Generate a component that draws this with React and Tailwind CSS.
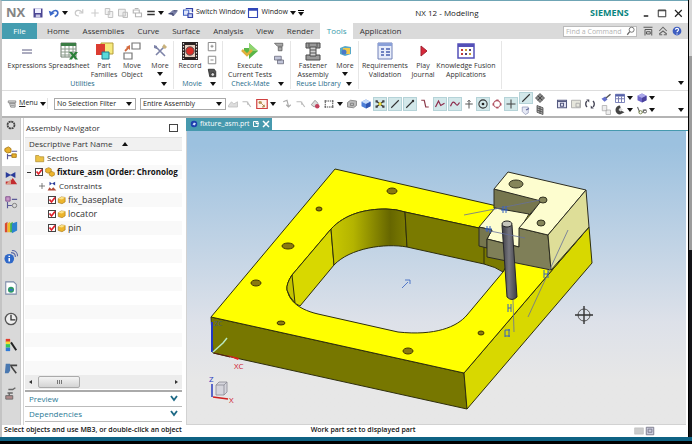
import clsx from 'clsx';

function Icon({ className = 'w-3.5 h-3.5', box = 16, children }) {
  return (
    <svg viewBox={`0 0 ${box} ${box}`} className={clsx('block shrink-0', className)} fill="none" aria-hidden="true">
      {children}
    </svg>
  );
}

function Caret({ className }) {
  return (
    <svg viewBox="0 0 6 4" className={clsx('block h-1 w-1.5 shrink-0', className)} aria-hidden="true">
      <path d="M0 0h6L3 4z" fill="#111" />
    </svg>
  );
}

const icons = {
  save: (
    <>
      <path d="M2 2h12v12H2z" fill="#4a4593" />
      <path d="M4 2h8v6H4z" fill="#eef" />
      <path d="M5 10h6v4H5z" fill="#c9c8e4" />
    </>
  ),
  undo: (
    <>
      <path d="M5 8C8 3 14 4 13 9c-.4 2-2 3-4 4" stroke="#3a68c8" strokeWidth="2.2" />
      <path d="M1 5l2 7 6-4z" fill="#3a68c8" />
    </>
  ),
  redo: <path d="M12 7C9 3 3 4 3 8c0 2 2 4 5 4M13 3v5H8" stroke="#c9c9c9" strokeWidth="1.6" />,
  plus: <path d="M8 3v10M3 8h10" stroke="#ccc" strokeWidth="1.5" />,
  copy: <path d="M3 2h6v8H3zM7 6h6v8H7z" stroke="#c2c2c2" strokeWidth="1.3" fill="#f3f3f3" />,
  paste: <path d="M2 3h9v9H2zM8 7h6v7H8z" stroke="#bdbdbd" strokeWidth="1.3" fill="#f0f0f0" />,
  clip: <path d="M3 4h8v4H3zM6 8h8v5H6zM5 2h5" stroke="#b5b5b5" strokeWidth="1.5" />,
  equals: <path d="M3 6h10M3 10h10" stroke="#333" strokeWidth="1.8" />,
  touch: (
    <>
      <path d="M2 9l6-5 6 2-5 6z" fill="#7b81a8" />
      <path d="M2 9h6v3M9 5h5" stroke="#343a66" strokeWidth="1.3" />
    </>
  ),
  switchWin: (
    <>
      <path d="M2 4h7v7H2z" fill="#dfe6fa" stroke="#3c5fc0" strokeWidth="1.4" />
      <path d="M5 2h9v5M8 9h6v5H8z" stroke="#3340a5" strokeWidth="1.6" fill="#c7d4f4" />
    </>
  ),
  window: (
    <>
      <path d="M2 2h12v12H2z" fill="#fff" stroke="#3146b8" strokeWidth="1.5" />
      <path d="M2 2h12v3H2z" fill="#3146b8" />
    </>
  ),
  gray1: <path d="M2 10l4-5 3 3 5-3v7H2z" fill="#ddd" stroke="#bbb" />,
  gray2: <path d="M2 5h6l5 7M9 5v4" stroke="#bbb" strokeWidth="1.6" />,
  redBox: (
    <>
      <path d="M1 2h14v12H1z" fill="#fff3ea" stroke="#d04040" strokeWidth="1.6" />
      <path d="M4 5h3v2H4zM7 7l4 4M11 9v3H8" fill="#d8c070" stroke="#a0702f" />
    </>
  ),
  arrowDown: <path d="M3 5l5-2 2 8M7 9l3 3 3-3" stroke="#aaa" strokeWidth="1.5" />,
  redDot: (
    <>
      <path d="M3 9l5-6 4 4-5 5z" fill="#ddd" stroke="#888" />
      <circle cx="11" cy="11" r="3" fill="#c2405c" />
    </>
  ),
  dashed: (
    <>
      <path d="M3 4h10v8H3z" stroke="#444" strokeWidth="1.3" strokeDasharray="2 1" />
      <path d="M2 3h2v2H2zM12 3h2v2h-2zM2 11h2v2H2zM12 11h2v2h-2z" fill="#666" />
    </>
  ),
  drum: <path d="M2 6l4-3 8 1v6l-4 3-8-1zM6 7h4v3H6z" fill="#bbb" stroke="#777" />,
  blueCube: (
    <>
      <path d="M2 5l6-3 6 3v6l-6 3-6-3z" fill="#4d7fd8" />
      <path d="M2 5l6-3 6 3-6 3z" fill="#c7dcfa" />
      <path d="M8 8v6l6-3V5z" fill="#3056b0" />
    </>
  ),
  snap: (
    <>
      <path d="M3 4l10 8M13 4L3 12" stroke="#333" strokeWidth="1.6" />
      <circle cx="8" cy="8" r="2.2" fill="#e8d427" />
      <path d="M2 3h3v3H2zM11 3h3v3h-3zM2 10h3v3H2zM11 10h3v3h-3z" fill="#444" />
    </>
  ),
  line: <path d="M3 13L13 3" stroke="#333" strokeWidth="1.5" />,
  lineDot: (
    <>
      <path d="M3 13L13 3" stroke="#333" strokeWidth="1.5" />
      <circle cx="12" cy="4" r="1.6" fill="#333" />
    </>
  ),
  step: <path d="M3 3h4l2 9h4" stroke="#8c3a4a" strokeWidth="1.6" />,
  wave: <path d="M2 12L6 4l3 6 5-3" stroke="#8c2a4a" strokeWidth="1.6" />,
  curve: <path d="M2 11c3-8 5-6 7-3s3 1 5-2" stroke="#8c2a4a" strokeWidth="1.6" />,
  up: <path d="M8 3v11M3 8h10M6 5l2-2 2 2" stroke="#555" strokeWidth="1.3" />,
  target: (
    <>
      <circle cx="8" cy="8" r="5.5" stroke="#333" strokeWidth="1.4" />
      <circle cx="8" cy="8" r="1.8" fill="#222" />
    </>
  ),
  quad: (
    <>
      <circle cx="8" cy="8" r="4.5" stroke="#b05060" strokeWidth="1.4" />
      <path d="M7 2h3v2H7zM7 12h3v2H7zM2 7h2v3H2zM12 7h2v3h-2z" fill="#b05060" />
    </>
  ),
  cross: <path d="M8 2v12M2 8h12" stroke="#444" strokeWidth="1.4" />,
  face: (
    <>
      <path d="M3 4h8v8l-4 2-4-4z" fill="#e6e9f5" stroke="#9298b8" />
      <path d="M8 8l4-2" stroke="#5a6398" strokeWidth="1.5" />
    </>
  ),
  move4: <path d="M8 2l3 3-3 3-3-3zM8 8l3 3-3 3-3-3zM2 8l3-3 3 3-3 3zM8 8l3-3 3 3-3 3z" fill="#888" stroke="#444" />,
  mesh: <path d="M4 2l8 3v9l-8-3zM4 5l8 3M4 8l8 3M8 3v10" fill="#aaa" stroke="#444" />,
  fit: (
    <>
      <path d="M2 3h12v10H2z" fill="#e5e5f3" stroke="#555a80" strokeWidth="1.4" />
      <path d="M2 4.500h12M6 7h4v4H6z" stroke="#555a80" strokeWidth="1.4" />
    </>
  ),
  fitGray: <path d="M2 3h12v10H2zM8 7h5v5H8z" fill="#e6e6dc" stroke="#aaa" strokeWidth="1.2" />,
  refresh: (
    <>
      <path d="M4 12a5.500 5.500 0 010-8M12 4a5.500 5.500 0 010 8" stroke="#445" strokeWidth="1.8" />
      <path d="M3 2h4v4zM13 14H9v-4z" fill="#445" />
    </>
  ),
  brush: (
    <>
      <path d="M2 9l5-3 3 4-4 3z" fill="#6470cc" />
      <path d="M8 8l6-5" stroke="#555" strokeWidth="2" />
    </>
  ),
  pageGray: <path d="M3 2h6v7H3zM8 8h6v6H8z" fill="#eee" stroke="#aaa" />,
  table: (
    <>
      <path d="M2 3h12v11H2z" fill="#fff" stroke="#5560a8" />
      <path d="M2 3h12v3H2z" fill="#5560a8" />
      <path d="M2 9h12M6 6v8M10 6v8" stroke="#777cb0" strokeWidth="1.3" />
    </>
  ),
  halfMoon: (
    <>
      <path d="M8 2a6 6 0 100 12l6-3-4-2z" fill="#444" />
      <path d="M8 5l4 2-3 3-3-2z" fill="#ddd" />
    </>
  ),
  purpleCube: (
    <>
      <path d="M2 5l6-3 6 3v6l-6 3-6-3z" fill="#6e66c8" />
      <path d="M2 5l6-3 6 3-6 3z" fill="#aaa7ea" />
      <path d="M8 8v6l6-3V5z" fill="#4b439c" />
    </>
  ),
  glasses: (
    <>
      <path d="M2 4l3 7M9 8h5M10 8l-1 4" stroke="#666" strokeWidth="1.4" />
      <circle cx="6" cy="11" r="2.2" stroke="#7c8a50" strokeWidth="1.3" />
      <circle cx="12" cy="10" r="2" stroke="#666" strokeWidth="1.3" />
    </>
  ),
};

function ToolButton({ name, on, className = 'h-3.5 w-3.5' }) {
  return (
    <button
      type="button"
      aria-label={name}
      className={clsx('flex shrink-0 items-center justify-center', on && 'border border-[#b5d3d8] bg-[#d3e8ea]', className)}
    >
      <Icon className="h-3 w-3">{icons[name]}</Icon>
    </button>
  );
}

function TitleBar() {
  return (
    <header className="flex h-[22px] shrink-0 items-center pt-px text-[7px] text-[#222]">
      <span className="w-[29px] pl-1 text-[13px] font-bold text-[#858585]">NX</span>
      <ToolButton name="save" />
      <ToolButton name="undo" className="ml-0.5 h-3.5 w-3.5" />
      <Caret className="ml-px" />
      <div className="ml-1 flex items-center">
        <ToolButton name="redo" />
        <ToolButton name="plus" className="ml-0.5 h-3.5 w-3.5" />
        <ToolButton name="copy" />
        <ToolButton name="paste" />
        <ToolButton name="clip" />
      </div>
      <ToolButton name="equals" />
      <Caret />
      <ToolButton name="touch" className="ml-0.5 h-3.5 w-3.5" />
      <button type="button" className="ml-0.5 flex items-center gap-0.5 whitespace-nowrap">
        <Icon className="h-3 w-3">{icons.switchWin}</Icon>
        Switch Window
      </button>
      <button type="button" className="ml-0.5 flex items-center gap-0.5">
        <Icon className="h-3 w-3">{icons.window}</Icon>
        Window
        <Caret />
      </button>
      <button type="button" aria-label="Customize" className="ml-0.5 flex flex-col gap-px">
        <span className="h-px w-1.5 bg-black" />
        <Caret />
      </button>
      <h1 className="flex-1 text-center text-[8px] text-[#222]">NX 12 - Modeling</h1>
      <span className="w-[38px] text-[9px] leading-3 font-bold text-[#0a8580]">SIEMENS</span>
      <div className="ml-3 flex items-center gap-1 pr-1">
        <button type="button" aria-label="Minimize">
          <Icon className="h-3 w-3"><path d="M5 12h6" stroke="#222" strokeWidth="2" /></Icon>
        </button>
        <button type="button" aria-label="Maximize">
          <Icon className="h-3 w-3"><path d="M3 4h10v9H3zM3 5h10" stroke="#333" strokeWidth="1.3" /></Icon>
        </button>
        <button type="button" aria-label="Close">
          <Icon className="h-3 w-3"><path d="M4 4l9 9M13 4l-9 9" stroke="#222" strokeWidth="1.6" /></Icon>
        </button>
      </div>
    </header>
  );
}

const tabs = ['Home', 'Assemblies', 'Curve', 'Surface', 'Analysis', 'View', 'Render', 'Tools', 'Application'];

function TabBar() {
  return (
    <nav className="flex h-4 shrink-0 items-stretch bg-[#dadada] text-[8px] text-[#333]">
      <button type="button" className="w-[35px] bg-[#449db0] text-white">File</button>
      <div className="flex pl-[3px]">
        {tabs.map((tab) => (
          <button key={tab} type="button" className={clsx('pr-1.5 pl-[7px]', tab === 'Tools' && 'bg-white text-[#3a9cac]')}>
            {tab}
          </button>
        ))}
      </div>
      <div className="ml-auto flex items-center gap-[3px] pr-1.5">
        <label className="flex h-[11px] w-[74px] items-center border border-[#bbb] bg-white">
          <input
            type="text"
            aria-label="Find a Command"
            placeholder="Find a Command"
            className="w-full min-w-0 px-0.5 text-[7px] leading-[9px] outline-none placeholder:text-[#b3b3b3]"
          />
          <Icon className="h-2.5 w-2.5">
            <circle cx="9" cy="6" r="4" stroke="#666" strokeWidth="1.4" />
            <path d="M6 9l-4 5" stroke="#666" strokeWidth="2" />
          </Icon>
        </label>
        <button type="button" aria-label="Full screen" className="ml-0.5">
          <Icon className="h-3 w-3"><path d="M2 3h12M4 6h9v8M4 6v8M6 9h5v3H6z" stroke="#555" strokeWidth="1.3" /></Icon>
        </button>
        <button type="button" aria-label="Minimize ribbon">
          <Icon className="h-3 w-3"><path d="M3 8l5-5 5 5M3 12l5-4 5 4M3 13h4M9 13h4" stroke="#666" strokeWidth="1.4" /></Icon>
        </button>
        <button type="button" aria-label="Help">
          <Icon className="h-2.5 w-2.5">
            <circle cx="8" cy="8" r="7" fill="#3d5dc0" />
            <path d="M5.500 6c0-3 5-3 5 0 0 2-2.500 2-2.500 4M8 12v1.500" stroke="#fff" strokeWidth="1.8" />
          </Icon>
        </button>
      </div>
    </nav>
  );
}

const ribbonIcons = {
  expressions: <path d="M5 9h10M5 12h10" stroke="#5a5a80" strokeWidth="1" />,
  spreadsheet: (
    <>
      <path d="M2 2h15v14H2z" fill="#fff" stroke="#6a7a6a" />
      <path d="M2 2h15v3H2z" fill="#3b7d45" />
      <path d="M2 8h15M2 11h15M2 14h15M6 5v11M10 5v11M14 5v11" stroke="#8a9a8a" strokeWidth="1" />
      <path d="M10 11h3l1.500 2 1.500-2h3l-3 3.500 3 4h-3L14.500 16 13 18.500h-3l3-4z" fill="#2a8038" />
    </>
  ),
  families: (
    <>
      <path d="M7 2h12v11H7z" fill="#f6ea7e" stroke="#b59d39" />
      <path d="M2 3h9v11H2z" fill="#dc3c31" />
      <path d="M8 11h7v7H8z" fill="#5adada" stroke="#1f7d90" />
    </>
  ),
  move: (
    <>
      <path d="M10 2h8v6h-8zM2 12h8v6H2z" fill="#fff" stroke="#777" strokeWidth="1.2" />
      <path d="M3 10l3-3" stroke="#d36a3e" strokeWidth="1.8" />
      <path d="M8 4v5L4 6z" fill="#d36a3e" />
    </>
  ),
  tools: (
    <>
      <path d="M6 6l9 9M15 5l-9 9" stroke="#7d83a8" strokeWidth="1.6" />
      <path d="M14 3l3 3-2 2-3-2z" fill="#c9b27c" />
      <path d="M4 4l3 1v3l-3-1z" fill="#7d83a8" />
    </>
  ),
  record: (
    <>
      <path d="M2 1h16v18H2z" fill="#2a2222" />
      <path d="M5 4h10v12H5z" fill="#e8d0c0" />
      <path d="M3.500 2v16M16.500 2v16" stroke="#ddd" strokeWidth="1.200" strokeDasharray="1.500 1.500" />
      <circle cx="10" cy="10" r="4.200" fill="#dd2f28" stroke="#555" />
    </>
  ),
  execute: (
    <>
      <path d="M9 2l9 8-9 8v-5H4V7h5z" fill="#5ab548" />
      <path d="M9 2l9 8H9z" fill="#8fd572" />
      <path d="M2 9l5 5 5-5" stroke="#e0b13c" strokeWidth="2.500" />
    </>
  ),
  fastener: (
    <>
      <path d="M3 2h14v5H3zM3 14h14v5H3z" fill="#9a9a9a" stroke="#4a4a4a" />
      <path d="M7 6h6v9H7z" fill="#d0d0d0" stroke="#4a4a4a" />
      <path d="M6 2v4M14 2v4M7 9h6M7 12h6" stroke="#555" />
    </>
  ),
  library: (
    <>
      <path d="M5 7l5-2 6 1v7l-6 2-5-2z" fill="#58a8c8" />
      <path d="M8 7h7v6H8z" fill="#f0c94a" />
      <circle cx="9" cy="11" r="2.500" fill="#4a78c8" />
    </>
  ),
  requirements: (
    <>
      <path d="M3 2h14v16H3z" fill="#e8edfa" stroke="#7080b8" />
      <path d="M3 2h14v3H3z" fill="#8aa0d8" />
      <path d="M6 8h3M11 8h4M6 11h3M11 11h4M6 14h3M11 14h4" stroke="#4a60b0" strokeWidth="1.500" />
    </>
  ),
  play: <path d="M8 5l6 5-6 5z" fill="#d8283a" stroke="#a02030" />,
  knowledge: (
    <>
      <path d="M2 3h16v14H2z" fill="#fff" stroke="#5450b8" strokeWidth="1.500" />
      <path d="M2 3h16v3H2z" fill="#5450b8" />
      <path d="M5 9h2M5 13h2" stroke="#c23a3a" strokeWidth="2" />
      <path d="M9 9h2M13 13h2" stroke="#c89b30" strokeWidth="2" />
      <path d="M13 9h2M9 13h2" stroke="#51407a" strokeWidth="2" />
    </>
  ),
};

function RibbonButton({ icon, lines, caret, className }) {
  return (
    <button type="button" className={clsx('flex flex-col items-center justify-start whitespace-nowrap leading-[9px]', className)}>
      <Icon box={20} className="h-5 w-5">{ribbonIcons[icon]}</Icon>
      <span className="block">{lines[0]}</span>
      {lines[1] && <span className="block">{lines[1]}</span>}
      {caret && <Caret className="mt-0.5" />}
    </button>
  );
}

function RibbonGroup({ label, children, className }) {
  return (
    <section className={clsx('flex shrink-0 flex-col border-r border-[#e6e6e6]', className)}>
      <div className="flex flex-1">{children}</div>
      {label && (
        <div className="flex h-2.5 items-center pr-1.5 leading-[10px] text-[#1f6c8a]">
          <span className="flex-1 text-center whitespace-nowrap">{label}</span>
          <Caret />
        </div>
      )}
    </section>
  );
}

function SmallStack({ children }) {
  return <div className="flex flex-col items-center gap-px">{children}</div>;
}

function Ribbon() {
  return (
    <div className="flex h-[52px] shrink-0 items-stretch border-b border-[#ddd] pt-0.5 pb-px pl-0.5 text-[7px] text-[#333]">
      <RibbonGroup label="Utilities" className="w-[170px]">
        <RibbonButton icon="expressions" lines={['Expressions']} className="w-[46px]" />
        <RibbonButton icon="spreadsheet" lines={['Spreadsheet']} className="w-[38px]" />
        <RibbonButton icon="families" lines={['Part', 'Families']} className="w-8" />
        <RibbonButton icon="move" lines={['Move', 'Object']} className="w-6" />
        <RibbonButton icon="tools" lines={['More']} caret className="ml-1 w-6" />
      </RibbonGroup>
      <RibbonGroup label="Movie" className="w-[49px]">
        <RibbonButton icon="record" lines={['Record']} className="w-8" />
        <SmallStack>
          <button type="button" aria-label="Pause"><Icon className="h-3 w-3"><path d="M3 2h10v11H3zM6 7h4M8 5v4" stroke="#888" strokeWidth="1.3" /></Icon></button>
          <button type="button" aria-label="Stop"><Icon className="h-3 w-3"><path d="M3 3h10v10H3zM6 8h4" stroke="#888" strokeWidth="1.3" /></Icon></button>
          <button type="button" aria-label="Movie settings">
            <Icon className="h-3 w-3">
              <path d="M3 3h8l2 3v7H5z" fill="#555" stroke="#222" />
              <circle cx="9" cy="10" r="2.500" fill="#ddd" stroke="#222" />
            </Icon>
          </button>
        </SmallStack>
      </RibbonGroup>
      <RibbonGroup label="Check-Mate" className="w-[68px]">
        <RibbonButton icon="execute" lines={['Execute', 'Current Tests']} className="w-[50px] pl-1" />
        <SmallStack>
          <button type="button" aria-label="Set up tests"><Icon className="h-3 w-3"><path d="M2 3h11v4H6zM7 8h5v5H7z" fill="#aaa" stroke="#555" /></Icon></button>
          <button type="button" aria-label="View results"><Icon className="h-3 w-3"><path d="M2 3h9v5H2zM6 8h8v5H6z" fill="#c0c4d8" stroke="#667" /></Icon></button>
        </SmallStack>
      </RibbonGroup>
      <RibbonGroup label="Reuse Library" className="w-[68px]">
        <RibbonButton icon="fastener" lines={['Fastener', 'Assembly']} className="w-11" />
        <RibbonButton icon="library" lines={['More']} caret className="w-5" />
      </RibbonGroup>
      <RibbonGroup className="w-[143px]">
        <RibbonButton icon="requirements" lines={['Requirements', 'Validation']} className="w-[52px]" />
        <RibbonButton icon="play" lines={['Play', 'Journal']} className="w-6" />
        <RibbonButton icon="knowledge" lines={['Knowledge Fusion', 'Applications']} className="w-[62px]" />
      </RibbonGroup>
      <button type="button" aria-label="Ribbon options" className="mt-auto mr-1 mb-1 ml-auto"><Caret /></button>
    </div>
  );
}

function Combo({ label, className }) {
  return (
    <div className={clsx('relative shrink-0', className)}>
      <select aria-label={label} className="block h-3 w-full appearance-none border border-[#aaa] bg-white pr-3 pl-0.5 text-[7px] leading-[10px] text-[#222]">
        <option>{label}</option>
      </select>
      <Caret className="pointer-events-none absolute top-1 right-1" />
    </div>
  );
}

function SelectionBar() {
  return (
    <div className="flex h-[27px] shrink-0 items-center border-b-2 border-[#b4b4b4] pl-1 text-[7px]">
      <button type="button" className="mr-1.5 flex w-[42px] items-center justify-center gap-0.5 border-r border-[#e3e3e3] text-[7px] text-[#222]">
        <Icon className="h-2.5 w-2.5"><path d="M2 3h12v3H2zM4 7h9v6H6zM6 10h6" fill="#ddd" stroke="#777" strokeWidth="1.2" /></Icon>
        <span><span className="underline">M</span>enu</span>
        <Caret />
      </button>
      <Combo label="No Selection Filter" className="w-[82px]" />
      <Combo label="Entire Assembly" className="ml-1 w-[86px]" />
      <div className="flex items-center">
        <ToolButton name="gray1" />
        <ToolButton name="gray2" />
        <ToolButton name="redBox" className="ml-px h-3.5 w-3.5" />
        <Caret className="ml-px" />
        <ToolButton name="arrowDown" className="ml-1 h-3.5 w-3.5" />
        <ToolButton name="gray2" />
        <ToolButton name="redDot" />
        <ToolButton name="dashed" />
        <Caret className="ml-px" />
        <ToolButton name="drum" className="ml-0.5 h-3.5 w-3.5" />
        <ToolButton name="blueCube" />
      </div>
      <div className="flex items-center gap-px">
        <ToolButton name="snap" on />
        <ToolButton name="line" on />
        <ToolButton name="lineDot" on />
        <ToolButton name="step" />
        <ToolButton name="wave" on />
        <ToolButton name="curve" on />
        <ToolButton name="up" className="h-3.5 w-3" />
        <ToolButton name="target" on />
        <ToolButton name="quad" className="h-3.5 w-3" />
        <ToolButton name="cross" on />
        <div className="grid grid-cols-2">
          <ToolButton name="line" on className="h-3 w-3.5" />
          <ToolButton name="move4" className="h-3 w-3.5" />
          <ToolButton name="face" className="h-3 w-3.5" />
          <ToolButton name="mesh" className="h-3 w-3.5" />
        </div>
      </div>
      <div className="ml-2 flex items-center">
        <ToolButton name="fit" />
        <ToolButton name="fitGray" />
        <ToolButton name="refresh" />
      </div>
      <div className="ml-0.5 flex flex-col">
        {[['brush', 'table', 'purpleCube'], ['pageGray', 'halfMoon', 'glasses']].map(([a, b, c]) => (
          <div key={a} className="flex items-center">
            <ToolButton name={a} className="h-3 w-3.5" />
            <ToolButton name={b} className="h-3 w-3.5" />
            <Caret />
            <ToolButton name={c} className="ml-0.5 h-3 w-3.5" />
            <Caret />
          </div>
        ))}
      </div>
      <button type="button" aria-label="Selection bar options" className="mt-3 mr-1 ml-auto"><Caret /></button>
    </div>
  );
}

const railItems = [
  {
    label: 'Options',
    height: 'h-3.5',
    art: <circle cx="8" cy="8" r="4" stroke="#444" strokeWidth="2" strokeDasharray="2.500 .6" />,
  },
  {
    label: 'Assembly Navigator',
    height: 'mt-2 h-[26px] bg-white',
    art: (
      <>
        <path d="M1 3l4-2 3 2v4L4 8 1 6z" fill="#e9b12e" stroke="#a67713" />
        <path d="M4 9v6M4 11h5M9 6h6" stroke="#5a5a98" strokeWidth="1.3" />
        <path d="M9 9h5v4H9z" fill="#e9b12e" stroke="#a67713" />
      </>
    ),
  },
  {
    label: 'Constraint Navigator',
    height: 'h-[24px]',
    art: (
      <>
        <path d="M2 1v7l6-3.500zM13 1v7L7 4.500z" fill="#2a3c9a" />
        <path d="M2 15h13l-5-7-3 4H2z" fill="#c22c30" />
        <path d="M2 15h6V9z" fill="#d9a08a" />
      </>
    ),
  },
  {
    label: 'Part Navigator',
    height: 'h-[24px]',
    art: (
      <>
        <path d="M2 2h5v5H2z" fill="#c998c8" stroke="#7a4a88" />
        <path d="M4 8v7M4 12h5M9 5h6" stroke="#5a5a98" strokeWidth="1.300" />
        <circle cx="12" cy="12" r="2.500" stroke="#777" />
      </>
    ),
  },
  {
    label: 'Reuse Library',
    height: 'h-[26px]',
    art: (
      <>
        <path d="M1 4l3-2v12H1z" fill="#d84a30" />
        <path d="M4 4l3-2v12H4z" fill="#edbd28" />
        <path d="M7 4l3-2v12H7z" fill="#45b548" />
        <path d="M9 4l6-2v10l-6 3z" fill="#2b82cf" />
      </>
    ),
  },
  {
    label: 'HD3D Tools',
    height: 'h-[34px]',
    art: (
      <>
        <circle cx="6" cy="10" r="5.500" fill="#2f68c8" />
        <path d="M6 9v4M6 6.500v1.500" stroke="#fff" strokeWidth="1.800" />
        <path d="M8 3c3 0 5 2 5 5M9 .5c4 0 6.500 3 6.500 6.500" stroke="#5f6ca8" strokeWidth="1.300" />
      </>
    ),
  },
  {
    label: 'Web Browser',
    height: 'h-[28px]',
    art: (
      <>
        <path d="M2 1h9l3 3v11H2z" fill="#fff" stroke="#7c8ba8" strokeWidth="1.200" />
        <circle cx="8" cy="10" r="3.500" fill="#2f9a68" />
        <path d="M6 9h4v2H7z" fill="#3a70c8" />
      </>
    ),
  },
  {
    label: 'History',
    height: 'h-[34px]',
    art: (
      <>
        <circle cx="8" cy="8" r="6.500" fill="#eee" stroke="#555" strokeWidth="1.500" />
        <path d="M8 3v6h5" stroke="#333" strokeWidth="1.500" />
      </>
    ),
  },
  {
    label: 'System Materials',
    height: 'h-[18px]',
    art: (
      <>
        <path d="M2 1h5v4H2z" fill="#e23c2c" />
        <path d="M2 4h5v3H2z" fill="#f3dc32" />
        <path d="M2 7h5v4H2z" fill="#36c858" />
        <path d="M2 11h5v4H2z" fill="#2f7ad8" />
        <path d="M8 5l6 9" stroke="#222" strokeWidth="2.200" />
      </>
    ),
  },
  {
    label: 'Process Studio',
    height: 'h-[28px]',
    art: (
      <>
        <path d="M2 3h5v8l-2 3H1z" fill="#4a78b0" />
        <path d="M7 5h8M8 6l6 8" stroke="#444" strokeWidth="1.800" />
      </>
    ),
  },
  {
    label: 'Roles',
    height: 'h-[22px]',
    art: (
      <>
        <path d="M5 4h5l3-2M4 8h6M6 8v4" stroke="#666" strokeWidth="1.600" />
        <path d="M2 11h8v4H2z" fill="#b08a8a" stroke="#666" />
      </>
    ),
  },
];

function ResourceRail() {
  return (
    <aside className="flex w-[19px] shrink-0 flex-col border-r border-[#c9c9c9] bg-[#d9d9d9]">
      {railItems.map((item) => (
        <button key={item.label} type="button" aria-label={item.label} className={clsx('flex shrink-0 items-center justify-center', item.height)}>
          <Icon className="h-3.5 w-3.5">{item.art}</Icon>
        </button>
      ))}
    </aside>
  );
}

function PartIcon() {
  return (
    <Icon className="h-2.5 w-2.5">
      <path d="M2 6l5-3 6 1v7l-5 3-6-2z" fill="#edb52d" stroke="#a87918" />
      <path d="M2 6l5-3 6 1-5 3z" fill="#fbe28a" />
    </Icon>
  );
}

function Check({ label }) {
  return (
    <span className="relative block h-2 w-2 shrink-0">
      <input type="checkbox" defaultChecked aria-label={label} className="block h-2 w-2 appearance-none border border-[#444] bg-white" />
      <svg viewBox="0 0 8 8" className="pointer-events-none absolute inset-0 h-2 w-2" fill="none" aria-hidden="true">
        <path d="M1.500 3.500L3.500 6 7 1.500" stroke="#e0202a" strokeWidth="1.700" />
      </svg>
    </span>
  );
}

const rowClass = 'flex h-3.5 shrink-0 items-center whitespace-nowrap overflow-hidden';

function AssemblyNavigator() {
  return (
    <section className="ml-0.5 flex w-[159px] shrink-0 flex-col border-l border-[#d5d5d5] pl-px">
      <div className="flex h-[19px] shrink-0 items-center justify-between pr-1 pl-px text-[8px] text-[#333]">
        Assembly Navigator
        <button type="button" aria-label="Float panel" className="h-2 w-[9px] border border-[#444]" />
      </div>
      <div className="flex h-3.5 shrink-0 items-center gap-2.5 border-y border-[#e2e2e2] bg-[#f1f1f1] pl-1 text-[8px] text-[#333]">
        Descriptive Part Name
        <Caret className="rotate-180" />
      </div>
      <ul className="flex min-h-0 flex-1 flex-col overflow-hidden text-[8px] text-[#333]">
        <li className={clsx(rowClass, 'gap-0.5 pl-2.5')}>
          <Icon className="h-2.5 w-2.5"><path d="M1 4h5l2 2h6v8H1z" fill="#ecc245" stroke="#a58024" /></Icon>
          Sections
        </li>
        <li className={clsx(rowClass, 'gap-0.5 bg-[#f9f9f9] pl-0.5 font-bold text-[#111]')}>
          <span className="h-px w-1 shrink-0 bg-[#333]" />
          <span className="pl-0.5"><Check label="fixture_asm" /></span>
          <Icon className="h-2.5 w-2.5">
            <path d="M1 3l5-2 4 2v5l-5 2-4-2z" fill="#edb52d" stroke="#a87918" />
            <path d="M7 9l4-2 4 2v4l-4 2-4-2z" fill="#edb52d" stroke="#a87918" />
          </Icon>
          fixture_asm (Order: Chronolog
        </li>
        <li className={clsx(rowClass, 'gap-0.5 pl-3.5')}>
          <Icon box={8} className="h-1.5 w-1.5"><path d="M4 0v8M0 4h8" stroke="#555" /></Icon>
          <Icon className="h-2.5 w-2.5">
            <path d="M4 1v6l4-3zM13 1v6L8 4z" fill="#2a3c9a" />
            <path d="M1 15h14l-5-5-3 3-3-3z" fill="#b04a38" />
          </Icon>
          Constraints
        </li>
        {['fix_baseplate', 'locator', 'pin'].map((name, i) => (
          <li key={name} className={clsx(rowClass, 'gap-px pl-[23px] text-[9px]', i % 2 === 0 && 'bg-[#f9f9f9]')}>
            <Check label={name} />
            <PartIcon />
            {name}
          </li>
        ))}
        {Array.from({ length: 10 }, (_, i) => (
          <li key={i} aria-hidden="true" className={clsx('h-3.5 shrink-0', i % 2 === 1 && 'bg-[#f9f9f9]')} />
        ))}
      </ul>
      <div className="flex h-3.5 shrink-0 items-center bg-[#ececec] px-1">
        <button type="button" aria-label="Scroll left" className="border-y-2 border-r-[3px] border-y-transparent border-r-[#333]" />
        <div className="ml-1.5 flex h-3 w-[42px] items-center justify-center gap-px rounded-xs border border-[#aaa] bg-linear-to-b from-[#f4f4f4] to-[#d4d4d4]">
          <span className="h-1 w-px bg-[#777]" />
          <span className="h-1 w-px bg-[#777]" />
          <span className="h-1 w-px bg-[#777]" />
        </div>
        <button type="button" aria-label="Scroll right" className="ml-auto border-y-2 border-l-[3px] border-y-transparent border-l-[#333]" />
      </div>
      <div className="mt-px h-0.5 shrink-0 bg-[#aaa]" />
      {['Preview', 'Dependencies'].map((name) => (
        <button key={name} type="button" className="flex h-[15px] shrink-0 items-center justify-between border-b border-[#bbb] px-1 text-[8px] text-[#2b7a96]">
          {name}
          <Icon box={8} className="h-2 w-2"><path d="M1 1l3 4 3-4" stroke="#1d6985" strokeWidth="1.800" /></Icon>
        </button>
      ))}
      <div className="h-[3px] shrink-0" />
    </section>
  );
}

const plateHoles = [
  [392, 191, 5, 3],
  [319, 209, 3, 2],
  [288, 246, 6, 3],
  [256, 283, 5, 3],
  [281, 323, 4, 2],
  [408, 351, 5, 3],
  [481, 333, 3, 2],
];

const locatorHoles = [
  [516, 184, 7, 4],
  [543, 200, 4, 3],
  [541, 223, 4, 3],
];

function Model() {
  return (
    <svg viewBox="187 131 499 293" className="h-full w-full" fill="none" role="img" aria-label="fixture_asm model">
      <defs>
        <linearGradient id="corner" x1="331" y1="0" x2="405" y2="0" gradientUnits="userSpaceOnUse">
          <stop offset="0" stopColor="#c9c900" />
          <stop offset="0.3" stopColor="#b4b400" />
          <stop offset="0.8" stopColor="#666600" />
          <stop offset="1" stopColor="#7a7a00" />
        </linearGradient>
        <linearGradient id="pin" x1="502" y1="0" x2="516" y2="0" gradientUnits="userSpaceOnUse">
          <stop offset="0" stopColor="#3c3c42" />
          <stop offset="0.5" stopColor="#77777f" />
          <stop offset="1" stopColor="#45454b" />
        </linearGradient>
      </defs>
      <g stroke="#2e2e0c" strokeWidth="1" strokeLinejoin="round">
        <path d="M211 317L464 373 467 409 213 353z" fill="#777700" />
        <path d="M464 373L589 227 592 263 467 409z" fill="#d8d800" />
        <path
          fillRule="evenodd"
          fill="#ffff00"
          d="M335 169L589 227 464 373 211 317zM331 229C345 214 365 209 386 209Q396 209 405 212L479 228C504 234 518 247 503 272L467 315C457 327 435 336 398 332L318 314C296 309 280 296 292 275z"
        />
        <path d="M292 275L331 229 334 265 300 306Q290 302 287 290Q286 284 292 275z" fill="#d8d800" />
        <path d="M292 275Q286 284 287 290Q289 297 295 303z" fill="#c4c400" />
        <path d="M331 229C345 214 365 209 386 209Q396 209 405 212L407 247C385 243 350 248 334 265z" fill="url(#corner)" />
        <path d="M405 212L479 228 500 233 515 250 503 272Q496 267 484 264L407 247z" fill="#7a7a00" />
        <path d="M484 240v24" />
      </g>
      {plateHoles.map(([x, y, rx, ry]) => (
        <ellipse key={`${x}-${y}`} cx={x} cy={y} rx={rx} ry={ry} fill="#8a7a10" stroke="#443800" />
      ))}

      <g stroke="#2c2c22" strokeWidth="1" strokeLinejoin="round">
        <path d="M494 189L543 200 529 215 494 208z" fill="#76764e" />
        <path d="M495 208L529 214 520 229 519 247 487 239 492 230 479 227z" fill="#fdfdcf" />
        <path d="M479 227L492 230 487 239 487 248 479 246z" fill="#76764e" />
        <path d="M487 239L519 247 519 228 548 235 551 270 487 257z" fill="#7f7f58" />
        <path d="M508 172L586 190 548 235 519 228 531 214 541 201 494 189z" fill="#fdfdcf" />
        <path d="M586 190L589 227 551 270 548 235z" fill="#dede98" />
      </g>
      {locatorHoles.map(([x, y, rx, ry]) => (
        <ellipse key={`${x}-${y}`} cx={x} cy={y} rx={rx} ry={ry} fill="#85855a" stroke="#333320" />
      ))}

      <path d="M502 225L507 297Q512 302 517 297L512 225z" fill="url(#pin)" stroke="#26262a" />
      <ellipse cx="507" cy="224" rx="5" ry="3" fill="#c6c6bc" stroke="#222" />

      {/* constraint markers */}
      <g stroke="#66709a" strokeWidth="0.800">
        <path d="M464 215L500 208 540 200M485 230L525 238M568 230L528 317M513 300L514 332" />
      </g>
      <g stroke="#3460c0" strokeWidth="1">
        <path d="M501 210h7M503 206v7M506 206v7M485 229h7M487 226v6M490 226v7" />
        <path d="M544 270v8M548 270v8M544 274h4M508 304v8M511 304v8M508 308h3M505 330h5M505 336h5M505 330v7M509 329v8" />
        <path d="M402 288l6-6M405 280h5v4" strokeWidth="0.800" />
      </g>

      {/* work coordinate system */}
      <path d="M212 322v30" stroke="#2238c0" strokeWidth="2" />
      <path d="M213 352l10-9 4-5" stroke="#b9e8c0" strokeWidth="1.500" />
      <path d="M214 353l16 4" stroke="#5a2010" />
      <path d="M226 355l13 3-1 2z" fill="#e02020" />
      <text x="214" y="326" fontSize="7" fill="#4a5a70">ZC</text>
      <text x="234" y="369" fontSize="8" fill="#d02030">XC</text>

      {/* view triad */}
      <text x="209" y="382" fontSize="8" fill="#2a3cc0">Z</text>
      <path d="M212 384v13" stroke="#2a3cc0" strokeWidth="1.500" />
      <path d="M213 397l15 2" stroke="#d02020" strokeWidth="1.500" />
      <path d="M216 385l3-3h8v10l-3 3h-8zM216 385h8v10M224 385l3-3" fill="#d5d5dc" stroke="#8a8a96" strokeWidth="0.800" />
      <text x="229" y="403" fontSize="8" fill="#d02030">X</text>

      {/* rotate cursor */}
      <circle cx="584" cy="315" r="6" stroke="#555" />
      <path d="M575 315h18M584 306v18" stroke="#333" strokeWidth="1.400" />
    </svg>
  );
}

function Viewport() {
  return (
    <main className="ml-1 flex min-w-0 flex-1 flex-col">
      <div className="flex h-[13px] shrink-0 border-b border-[#4699ae]">
        <div className="flex w-[86px] items-center gap-0.5 bg-[#4699ae] px-1 text-[7px] whitespace-nowrap text-white">
          <Icon className="h-2 w-2">
            <circle cx="8" cy="8" r="6.500" fill="#1f3fae" />
            <path d="M5 9l3-4 4 2-3 4z" fill="#cfe0ff" />
          </Icon>
          <span className="flex-1">fixture_asm.prt</span>
          <Icon className="h-2 w-2"><path d="M3 3h9v10H3zM8 3v4h6" stroke="#fff" strokeWidth="2" /></Icon>
          <button type="button" aria-label="Close part">
            <Icon className="h-2 w-2"><path d="M2 2l12 12M14 2L2 14" stroke="#fff" strokeWidth="3" /></Icon>
          </button>
        </div>
      </div>
      <div className="mr-0.5 min-h-0 flex-1 border-b border-l border-[#d2d2d2] bg-linear-to-b from-[#9cc1df] from-5% via-[#dde1e9] via-65% to-[#e7e7e7] to-85%">
        <Model />
      </div>
    </main>
  );
}

export default function App() {
  return (
    <div className="flex h-screen w-full flex-col overflow-hidden bg-black font-['Open_Sans','Noto_Sans',sans-serif]">
      <div className="flex min-h-0 flex-1">
        <div className="flex min-w-0 flex-1 flex-col border-t border-l-2 border-t-[#6fa5b5] border-l-[#c4c4c4] bg-white">
          <TitleBar />
          <TabBar />
          <Ribbon />
          <SelectionBar />
          <div className="flex min-h-0 flex-1">
            <ResourceRail />
            <AssemblyNavigator />
            <Viewport />
          </div>
          <footer className="flex h-3 shrink-0 items-center pb-px text-[7px] font-semibold text-[#111]">
            <span className="w-[45%] pl-0.5">Select objects and use MB3, or double-click an object</span>
            <span className="flex-1">Work part set to displayed part</span>
            <div className="flex w-[54px] gap-px">
              <Icon className="h-2.5 w-2.5"><path d="M1 3h14v10H1z" fill="#ccc" stroke="#bbb" /></Icon>
              <Icon className="h-2.5 w-2.5"><path d="M2 2h12v12H2zM5 5h6v5H5z" fill="#ccd" stroke="#778" strokeWidth="1.400" /></Icon>
            </div>
          </footer>
        </div>
        <div className="flex w-1 shrink-0 flex-col border-l border-black">
          <div className="h-14 bg-[#d8d8d8]" />
          <div className="h-[194px] bg-[#9c9c9c]" />
          <div className="flex-1 bg-[#141418]" />
        </div>
      </div>
      <div className="h-1 shrink-0 bg-[#0f6283]" />
      <div className="h-[3px] shrink-0 bg-black" />
    </div>
  );
}
